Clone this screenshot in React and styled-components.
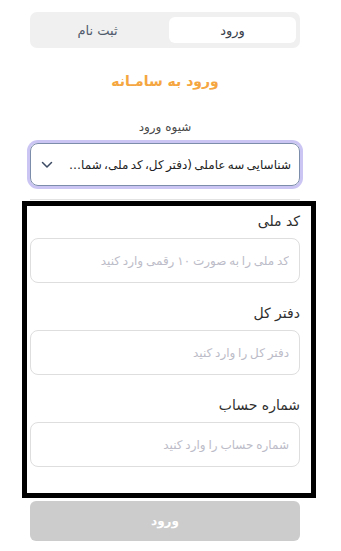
import React, { useState } from 'react';
import styled, { createGlobalStyle } from 'styled-components';

const GlobalStyle = createGlobalStyle`
    body{
        margin:0;
        background:#fff;
        font-family:"DejaVu Sans", "Noto Sans", sans-serif;
        direction:rtl;
    }
`;

const Page = styled.div`
    width:341px;
    padding-top:12px;
`;

const Column = styled.div`
    margin:0 41px 0 30px;
    display:flex;
    flex-direction:column;
`;

const TabBar = styled.div`
    height:36px;
    box-sizing:border-box;
    background:#f0f0f0;
    border-radius:7px;
    padding:5px 4px;
    display:flex;
    gap:8px;
`;

const Tab = styled.button`
    flex:1;
    border:none;
    border-radius:6px;
    background:${props => props.$active ? '#fff' : 'transparent'};
    color:${props => props.$active ? '#3a3f4b' : '#4f5a6b'};
    font-family:inherit;
    font-size:13px;
    padding:0;
    cursor:pointer;
`;

const Title = styled.h2`
    margin:23px 0 0;
    text-align:center;
    color:#f5a640;
    font-size:14px;
    line-height:20px;
    font-weight:bold;
`;

const MethodLabel = styled.div`
    margin-top:26px;
    text-align:center;
    color:#4a4a4a;
    font-size:12px;
    line-height:20px;
`;

const Select = styled.div`
    margin-top:6px;
    height:43px;
    box-sizing:border-box;
    border:1.5px solid #7c8cab;
    border-radius:8px;
    box-shadow:0 0 0 3px #cbc5f4;
    display:flex;
    align-items:center;
    padding:0 8px 0 10px;
    gap:14px;
    color:#222;
    font-size:12px;
    word-spacing:-1.5px;
`;

const SelectText = styled.span`
    flex:1;
    min-width:0;
    white-space:nowrap;
    overflow:hidden;
    text-overflow:ellipsis;
`;

const Divider = styled.hr`
    margin:13px 0 0;
    border:none;
    border-top:1px solid #e2e2e2;
`;

const Frame = styled.div`
    margin:1px -16px 0 -8px;
    border:5px solid #000;
    padding:5px 11px 26px 3px;
    display:flex;
    flex-direction:column;
    gap:20px;
`;

const Field = styled.div`
    display:flex;
    flex-direction:column;
    gap:7px;
`;

const Label = styled.label`
    color:#2f2f2f;
    font-size:14px;
    line-height:20px;
`;

const Input = styled.input`
    height:45px;
    box-sizing:border-box;
    border:1px solid #dedede;
    border-radius:8px;
    padding:0 10px;
    font-family:inherit;
    font-size:12px;
    word-spacing:-1px;
    direction:rtl;
    outline:none;
    &::placeholder{
        color:#bcbcc8;
    }
`;

const Submit = styled.button`
    margin-top:3px;
    height:40px;
    border:none;
    border-radius:6px;
    background:#cccccc;
    color:#fff;
    font-family:inherit;
    font-size:12px;
    font-weight:bold;
`;

const Chevron = () => (
    <svg width="12" height="8" viewBox="0 0 12 8" fill="none">
        <path d="M1.5 1.5L6 6L10.5 1.5" stroke="#3d4a63" strokeWidth="1.5" strokeLinecap="round" strokeLinejoin="round" />
    </svg>
);

const fields = [
    { label: 'کد ملی', placeholder: 'کد ملی را به صورت ۱۰ رقمی وارد کنید' },
    { label: 'دفتر کل', placeholder: 'دفتر کل را وارد کنید' },
    { label: 'شماره حساب', placeholder: 'شماره حساب را وارد کنید' },
];

export default function App() {
    const [tab, setTab] = useState('login');

    return (
        <Page>
            <GlobalStyle />
            <Column>
                <TabBar>
                    <Tab $active={tab === 'login'} onClick={() => setTab('login')}>ورود</Tab>
                    <Tab $active={tab === 'register'} onClick={() => setTab('register')}>ثبت نام</Tab>
                </TabBar>
                <Title>ورود به سامـانه</Title>
                <MethodLabel>شیوه ورود</MethodLabel>
                <Select>
                    <SelectText>شناسایی سه عاملی (دفتر کل، کد ملی، شماره حساب)</SelectText>
                    <Chevron />
                </Select>
                <Divider />
                <Frame>
                    {fields.map(f => (
                        <Field key={f.label}>
                            <Label>{f.label}</Label>
                            <Input placeholder={f.placeholder} />
                        </Field>
                    ))}
                </Frame>
                <Submit disabled>ورود</Submit>
            </Column>
        </Page>
    );
}
